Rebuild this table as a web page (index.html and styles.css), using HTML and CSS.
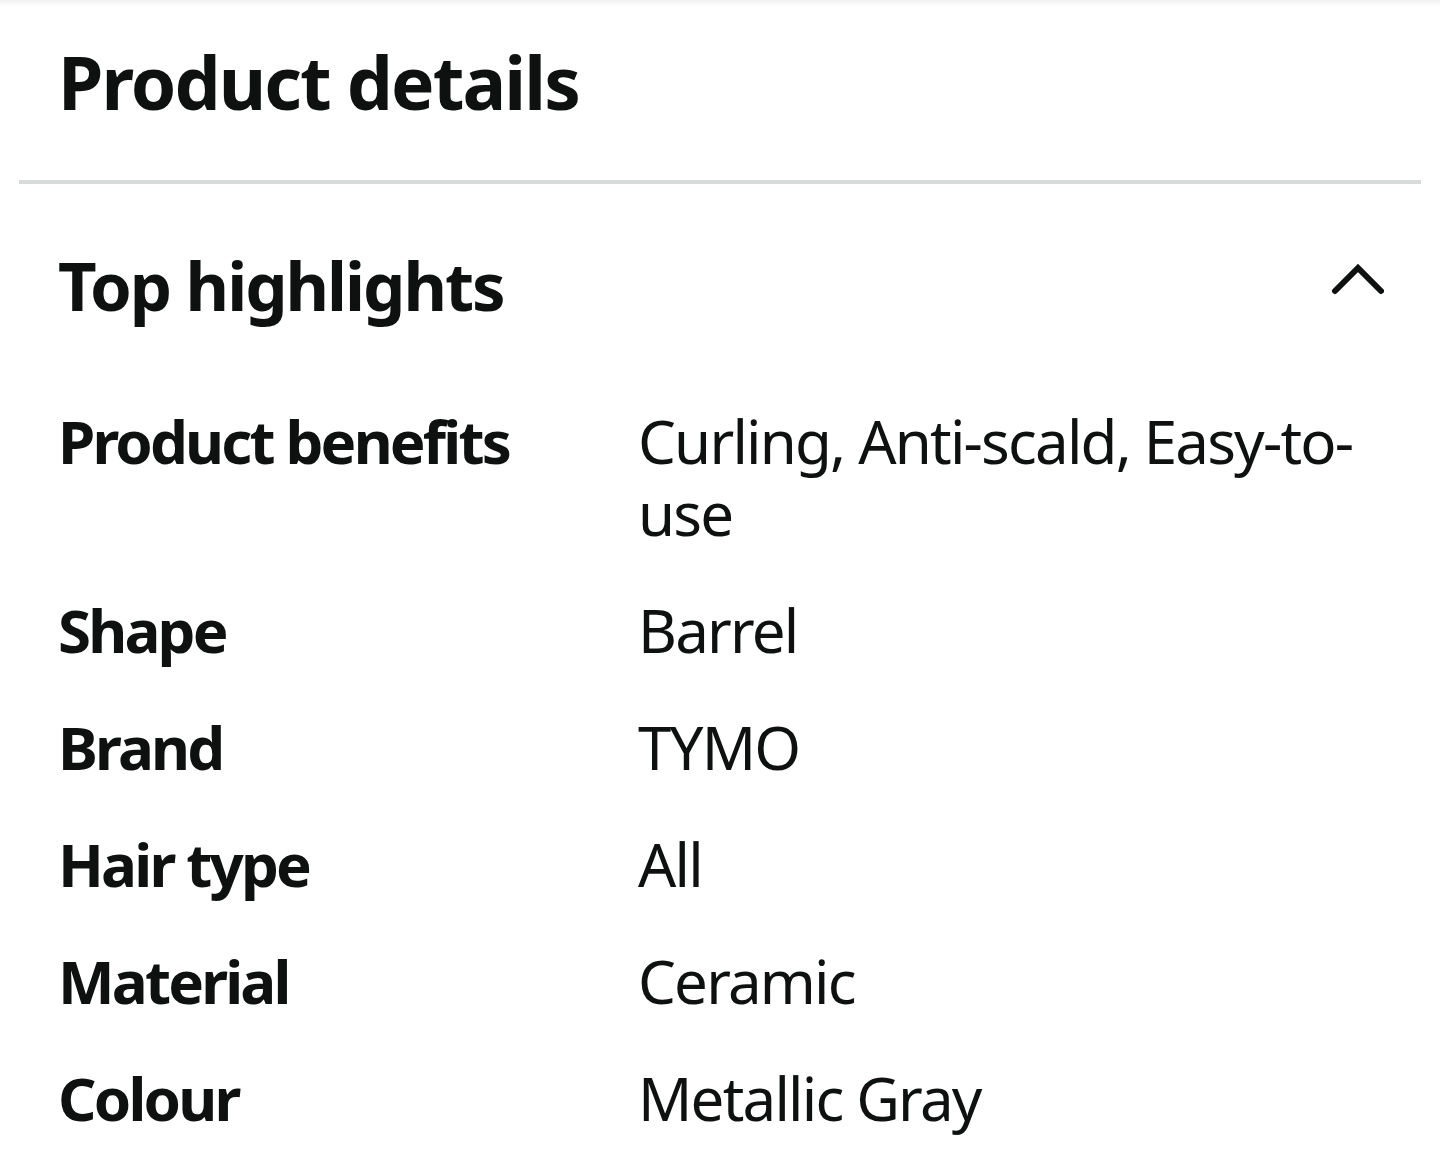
FILE: index.html
```html
<!DOCTYPE html>
<html lang="en">
<head>
<meta charset="utf-8">
<title>Product details</title>
<link rel="stylesheet" href="styles.css">
</head>
<body>
<div class="top-shade"></div>
<section class="details">
  <h1 class="title">Product details</h1>
  <hr class="divider">
  <div class="section-head">
    <h2 class="subtitle">Top highlights</h2>
    <svg class="chevron" width="54" height="34" viewBox="0 0 54 34" aria-hidden="true">
      <polyline points="5,29 28,6 51,29" fill="none" stroke="#0f1111" stroke-width="6" stroke-linecap="round" stroke-linejoin="miter"/>
    </svg>
  </div>
  <dl class="specs">
    <div class="row"><dt>Product benefits</dt><dd>Curling, Anti-scald, Easy-to-use</dd></div>
    <div class="row"><dt>Shape</dt><dd>Barrel</dd></div>
    <div class="row"><dt>Brand</dt><dd>TYMO</dd></div>
    <div class="row"><dt>Hair type</dt><dd>All</dd></div>
    <div class="row"><dt>Material</dt><dd>Ceramic</dd></div>
    <div class="row"><dt>Colour</dt><dd>Metallic Gray</dd></div>
  </dl>
</section>
</body>
</html>
```
FILE: styles.css
```css
html, body {
  margin: 0;
  padding: 0;
  background: #ffffff;
}
body {
  font-family: "Noto Sans", "Open Sans", sans-serif;
  color: #0f1111;
}
.top-shade {
  height: 6px;
  background: linear-gradient(#f1f1f1, #ffffff);
}
.details {
  padding-top: 32px;
}
.title {
  margin: 0;
  padding: 0 58px;
  font-size: 73px;
  line-height: 88px;
  font-weight: 700;
  letter-spacing: -1.9px;
}
.divider {
  margin: 54px 19px 0 19px;
  border: 0;
  height: 4px;
  background: #d9dada;
}
.section-head {
  display: flex;
  justify-content: space-between;
  align-items: center;
  padding: 61px 56px 0 58px;
}
.subtitle {
  margin: 0;
  font-size: 67px;
  line-height: 80px;
  font-weight: 700;
  letter-spacing: -2px;
}
.chevron {
  display: block;
  margin-top: -12px;
}
.specs {
  margin: 80px 0 0 0;
  padding: 0 58px;
}
.row {
  display: grid;
  grid-template-columns: 580px 1fr;
  margin-bottom: 45px;
  font-size: 60px;
  line-height: 72px;
}
.row dt {
  font-weight: 700;
  letter-spacing: -2.8px;
}
.row dd {
  margin: 0;
  font-weight: 400;
  letter-spacing: -1.8px;
}
```
